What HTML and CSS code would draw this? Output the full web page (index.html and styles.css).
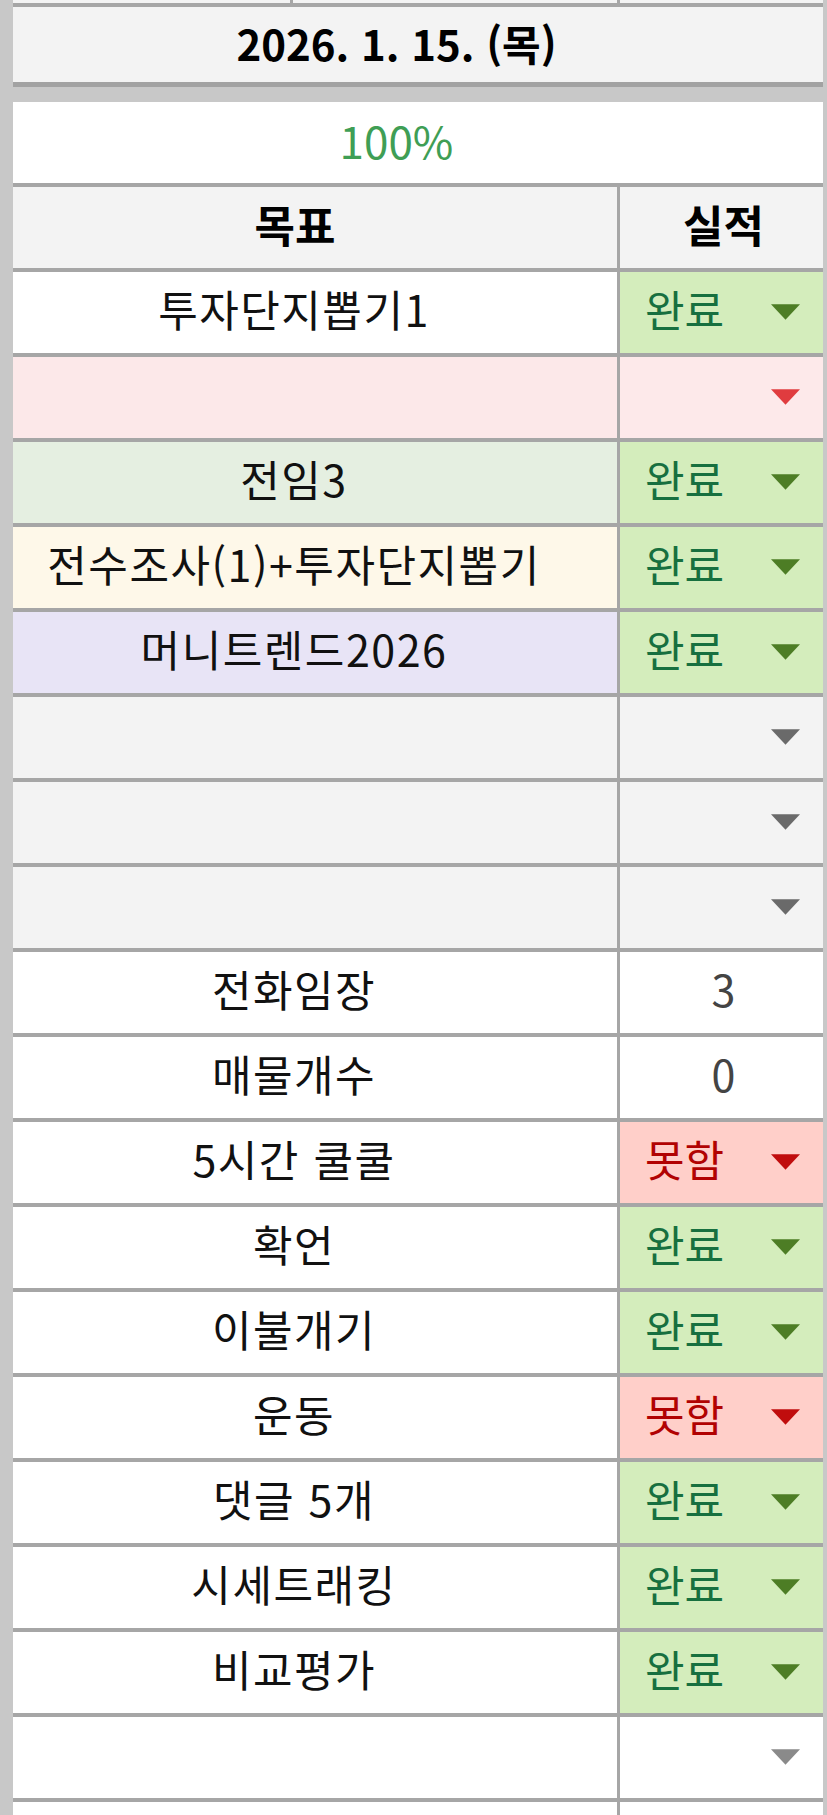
FILE: index.html
```html
<!DOCTYPE html>
<html lang="ko">
<head>
<meta charset="utf-8">
<title>Daily check</title>
<link rel="stylesheet" href="styles.css">
</head>
<body>
<div class="sheet">
  <div class="toprow"><div></div><div></div><div></div></div>
  <div class="date">2026. 1. 15. (목)</div>
  <div class="rate">100%</div>
  <div class="grid">
    <div class="c goal head">목표</div>
    <div class="c res head center">실적</div>

    <div class="c goal white">투자단지뽑기1</div>
    <div class="c res ok"><span>완료</span><svg class="arr" viewBox="0 0 26 14"><polygon points="0,0 26,0 13,14"/></svg></div>

    <div class="c goal pink"></div>
    <div class="c res pinkres"><span></span><svg class="arr" viewBox="0 0 26 14"><polygon points="0,0 26,0 13,14"/></svg></div>

    <div class="c goal mint">전임3</div>
    <div class="c res ok"><span>완료</span><svg class="arr" viewBox="0 0 26 14"><polygon points="0,0 26,0 13,14"/></svg></div>

    <div class="c goal cream">전수조사(1)+투자단지뽑기</div>
    <div class="c res ok"><span>완료</span><svg class="arr" viewBox="0 0 26 14"><polygon points="0,0 26,0 13,14"/></svg></div>

    <div class="c goal lav">머니트렌드2026</div>
    <div class="c res ok"><span>완료</span><svg class="arr" viewBox="0 0 26 14"><polygon points="0,0 26,0 13,14"/></svg></div>

    <div class="c goal grey"></div>
    <div class="c res greyres"><span></span><svg class="arr" viewBox="0 0 26 14"><polygon points="0,0 26,0 13,14"/></svg></div>

    <div class="c goal grey"></div>
    <div class="c res greyres"><span></span><svg class="arr" viewBox="0 0 26 14"><polygon points="0,0 26,0 13,14"/></svg></div>

    <div class="c goal grey"></div>
    <div class="c res greyres"><span></span><svg class="arr" viewBox="0 0 26 14"><polygon points="0,0 26,0 13,14"/></svg></div>

    <div class="c goal white">전화임장</div>
    <div class="c res num">3</div>

    <div class="c goal white">매물개수</div>
    <div class="c res num">0</div>

    <div class="c goal white">5시간 쿨쿨</div>
    <div class="c res bad"><span>못함</span><svg class="arr" viewBox="0 0 26 14"><polygon points="0,0 26,0 13,14"/></svg></div>

    <div class="c goal white">확언</div>
    <div class="c res ok"><span>완료</span><svg class="arr" viewBox="0 0 26 14"><polygon points="0,0 26,0 13,14"/></svg></div>

    <div class="c goal white">이불개기</div>
    <div class="c res ok"><span>완료</span><svg class="arr" viewBox="0 0 26 14"><polygon points="0,0 26,0 13,14"/></svg></div>

    <div class="c goal white">운동</div>
    <div class="c res bad"><span>못함</span><svg class="arr" viewBox="0 0 26 14"><polygon points="0,0 26,0 13,14"/></svg></div>

    <div class="c goal white">댓글 5개</div>
    <div class="c res ok"><span>완료</span><svg class="arr" viewBox="0 0 26 14"><polygon points="0,0 26,0 13,14"/></svg></div>

    <div class="c goal white">시세트래킹</div>
    <div class="c res ok"><span>완료</span><svg class="arr" viewBox="0 0 26 14"><polygon points="0,0 26,0 13,14"/></svg></div>

    <div class="c goal white">비교평가</div>
    <div class="c res ok"><span>완료</span><svg class="arr" viewBox="0 0 26 14"><polygon points="0,0 26,0 13,14"/></svg></div>

    <div class="c goal white"></div>
    <div class="c res whiteres"><span></span><svg class="arr" viewBox="0 0 26 14"><polygon points="0,0 26,0 13,14"/></svg></div>

    <div class="c goal white"></div>
    <div class="c res whiteres"></div>
  </div>
</div>
</body>
</html>
```

FILE: styles.css
```css
html, body {
  margin: 0;
  padding: 0;
}
body {
  background: #c8c8c8;
  font-family: "Noto Sans CJK KR", "Noto Sans", sans-serif;
  color: #111;
  width: 827px;
  height: 1815px;
  overflow: hidden;
}
.sheet {
  margin-left: 13px;
  width: 810px;
}
.toprow {
  display: grid;
  grid-template-columns: 277px 324px 203px;
  column-gap: 3px;
  height: 3px;
  background: #a6a6a6;
  border-bottom: 4px solid #a6a6a6;
}
.toprow div {
  background: #f3f3f3;
}
.date {
  box-sizing: border-box;
  height: 80px;
  background: #f3f3f3;
  border-bottom: 5px solid #a2a2a2;
  margin-bottom: 15px;
  display: flex;
  align-items: center;
  justify-content: center;
  padding: 0 43px 4px 0;
  font-size: 42px;
  line-height: 1;
  font-weight: 700;
  color: #000;
}
.rate {
  box-sizing: border-box;
  height: 85px;
  background: #fff;
  border-bottom: 4px solid #a6a6a6;
  display: flex;
  align-items: center;
  justify-content: center;
  padding: 0 43px 6px 0;
  font-size: 44px;
  line-height: 1;
  color: #3f9e55;
}
.grid {
  display: grid;
  grid-template-columns: 604px 203px;
  grid-auto-rows: 81px;
  gap: 4px 3px;
  background: #a6a6a6;
}
.c {
  box-sizing: border-box;
  display: flex;
  align-items: center;
  font-size: 43px;
  line-height: 1;
  padding-bottom: 8px;
}
.goal {
  justify-content: center;
  padding-right: 42px;
  color: #111;
  letter-spacing: 1.5px;
}
.head {
  background: #f3f3f3;
  font-weight: 700;
  color: #000;
  font-size: 44px;
  letter-spacing: 0;
}
.head.goal {
  padding-right: 40px;
}
.res {
  justify-content: space-between;
  padding-left: 25px;
  padding-right: 23px;
}
.res.center {
  justify-content: center;
  padding-left: 4px;
  padding-right: 0;
}
.white { background: #fff; }
.pink { background: #fce8e9; }
.mint { background: #e5efe1; }
.cream { background: #fef8e9; }
.lav { background: #e8e4f6; }
.grey { background: #f3f3f3; }

.arr {
  width: 29px;
  height: 16px;
  display: block;
  margin-top: 6px;
}
.ok {
  background: #d4edbc;
  color: #17703f;
}
.ok .arr { fill: #4d7d25; }
.bad {
  background: #ffcfc9;
  color: #b10202;
}
.bad .arr { fill: #c00d0d; }
.pinkres { background: #fde9ea; }
.pinkres .arr { fill: #e03c3f; }
.greyres { background: #f3f3f3; }
.greyres .arr { fill: #6a6a6a; }
.whiteres { background: #fff; }
.whiteres .arr { fill: #8a8a8a; }
.num {
  background: #fff;
  justify-content: center;
  padding-left: 4px;
  padding-right: 0;
  color: #444;
}
```
